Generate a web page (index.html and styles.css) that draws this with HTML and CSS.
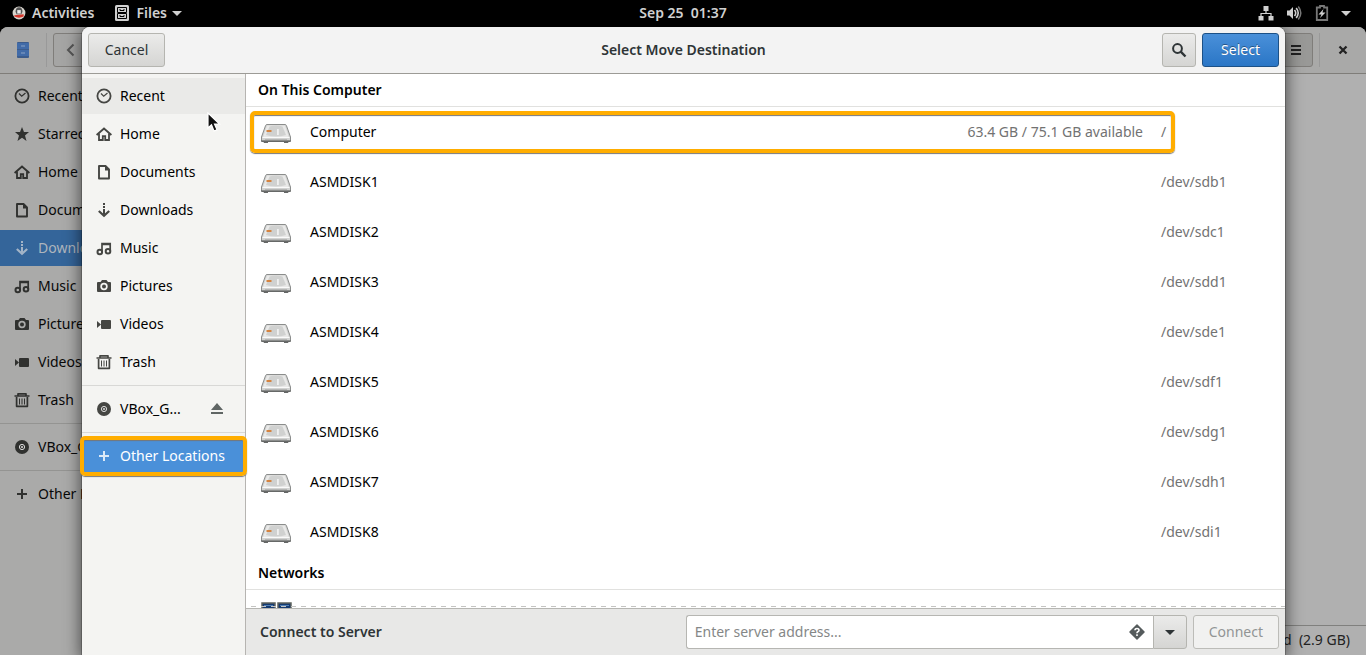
FILE: index.html
```html
<!DOCTYPE html>
<html lang="en">
<head>
<meta charset="utf-8">
<title>Select Move Destination</title>
<link rel="stylesheet" href="styles.css">
</head>
<body>
<svg class="sprite" aria-hidden="true">
  <symbol id="i-recent" viewBox="0 0 16 16"><circle cx="8" cy="8" r="6.6" fill="none" stroke="currentColor" stroke-width="1.8"/><path d="M5 5.500l2.700 2.700L11.500 5" fill="none" stroke="currentColor" stroke-width="1.200"/></symbol>
  <symbol id="i-star" viewBox="0 0 16 16"><path d="M8 1l2 5h5l-4 3.400L12.500 15 8 11.700 3.500 15 5 9.400 1 6h5z" fill="currentColor"/></symbol>
  <symbol id="i-home" viewBox="0 0 16 16"><path d="M.6 9L8 2.600 15.400 9" fill="none" stroke="currentColor" stroke-width="1.900"/><path d="M3 7.500V14h3.800v-3.800h2.400V14H13V7.500" fill="none" stroke="currentColor" stroke-width="1.800"/></symbol>
  <symbol id="i-doc" viewBox="0 0 16 16"><path d="M3 2h6.500L13 5.500V14.500H3z" fill="none" stroke="currentColor" stroke-width="1.900" stroke-linejoin="round"/><path d="M9 1v5.500h5z" fill="currentColor"/></symbol>
  <symbol id="i-down" viewBox="0 0 16 16"><path d="M7 1h2v2H7zM7 4h2v2H7zM7 7h2v5H7z" fill="currentColor"/><path d="M2.800 9L8 13.700 13.200 9" fill="none" stroke="currentColor" stroke-width="2.200"/></symbol>
  <symbol id="i-music" viewBox="0 0 16 16"><path d="M6 12V3.500h8.200V11M6 4.500h8" fill="none" stroke="currentColor" stroke-width="1.700"/><circle cx="3.800" cy="12" r="2.300" fill="none" stroke="currentColor" stroke-width="2"/><circle cx="12" cy="11.200" r="2.300" fill="none" stroke="currentColor" stroke-width="2"/></symbol>
  <symbol id="i-photo" viewBox="0 0 16 16"><path fill="currentColor" fill-rule="evenodd" d="M2 4h2.500L6 2h4.500L12 4h2q1 0 1 1v8q0 1-1 1H2q-1 0-1-1V5q0-1 1-1zM8 4.800a3.700 3.700 0 100 7.400 3.700 3.700 0 000-7.400z"/><circle cx="8" cy="8.500" r="2" fill="currentColor"/></symbol>
  <symbol id="i-video" viewBox="0 0 16 16"><rect x="5" y="4" width="10" height="9" rx="1" fill="currentColor"/><path d="M1 5l4 3.500L1 12z" fill="currentColor"/></symbol>
  <symbol id="i-trash" viewBox="0 0 16 16"><path d="M.5 4h15M4 3.500V1.800h8v1.700M2.600 5v9.300h10.800V5" fill="none" stroke="currentColor" stroke-width="1.700" stroke-linejoin="round"/><path d="M5.500 6.500v6M8 6.500v6M10.500 6.500v6" stroke="currentColor"/></symbol>
  <symbol id="i-disc" viewBox="0 0 16 16"><circle cx="8" cy="8" r="7" fill="currentColor"/><circle cx="8" cy="8" r="2.600" fill="none" stroke="#ddd" stroke-width="1"/><circle cx="8" cy="8" r="1" fill="#ddd"/></symbol>
  <symbol id="i-plus" viewBox="0 0 16 16"><path d="M8 3v10M3 8h10" stroke="currentColor" stroke-width="2"/></symbol>
  <symbol id="i-eject" viewBox="0 0 16 16"><path d="M8 2l6 7H2zM2 11h12v2H2z" fill="currentColor"/></symbol>
  <symbol id="i-search" viewBox="0 0 16 16"><circle cx="6.500" cy="6.500" r="4.400" fill="none" stroke="currentColor" stroke-width="2"/><path d="M9.700 9.700l4.800 4.800" stroke="currentColor" stroke-width="2.400"/></symbol>
  <symbol id="i-menu" viewBox="0 0 16 16"><path d="M3 4h10M3 8h10M3 12h10" stroke="currentColor" stroke-width="2"/></symbol>
  <symbol id="i-close" viewBox="0 0 16 16"><path d="M4.500 4.500l7 7M11.500 4.500l-7 7" stroke="currentColor" stroke-width="2.300"/></symbol>
  <symbol id="i-back" viewBox="0 0 16 16"><path d="M11.500 2.500L6 8l5.500 5.500" fill="none" stroke="currentColor" stroke-width="2"/></symbol>
  <symbol id="i-caret" viewBox="0 0 16 16"><path d="M3 6h10l-5 5z" fill="currentColor"/></symbol>
  <symbol id="i-help" viewBox="0 0 16 16"><path d="M8 1l7 7-7 7-7-7z" fill="currentColor" stroke="currentColor" stroke-width="1.500" stroke-linejoin="round"/><path d="M6 6.300q0-1.800 2-1.800t2 1.700q0 1-1.200 1.600-.8.400-.8 1.500M8 10.300v1.800" fill="none" stroke="#fff" stroke-width="1.600"/></symbol>
  <symbol id="i-cabinet" viewBox="0 0 16 16"><rect x="1" width="14" height="16" rx="1.500" fill="currentColor"/><path d="M3.500 2.500h9v5h-9zM3.500 8.500h9v5h-9z" fill="none" stroke="#000"/><path d="M6 4v1.500h4V4M6 10v1.500h4V10" fill="none" stroke="#000"/></symbol>
  <symbol id="i-network" viewBox="0 0 16 16"><path d="M5.500 1h5v5h-5zM.5 11h5v4.500h-5zM10.500 11h5v4.500h-5z" fill="currentColor"/><path d="M8 6v2.500M3 11V8.500h10V11" fill="none" stroke="currentColor" stroke-width="1.200"/></symbol>
  <symbol id="i-sound" viewBox="0 0 16 16"><path d="M1 5.500h2.500L7 2v12l-3.500-3.500H1z" fill="currentColor"/><path d="M8.500 5q2.500 3 0 6M10.200 3q4 5 0 10" fill="none" stroke="currentColor" stroke-width="1.600"/><path d="M12.300 1.500q5 6.500 0 13" fill="none" stroke="#777" stroke-width="1.500"/></symbol>
  <symbol id="i-battery" viewBox="0 0 16 16"><path d="M6 1h4v1.500h3.200v12.500H2.800V2.500H6z" fill="none" stroke="#777" stroke-width="1.800"/><path d="M9.500 4L4.500 9.500h3L6 13l5.500-5.500h-3z" fill="currentColor"/></symbol>
  <symbol id="i-drive" viewBox="0 0 32 24">
    <path d="M1 17v4q0 1 1 1h1.500l.5 1h4v-1h16v1h4l.5-1H30q1 0 1-1v-4z" fill="#666867"/>
    <path d="M7 4.500h18q1 0 1.400 1L30.500 17v2.500q0 1-1 1h-27q-1 0-1-1V17L5.600 5.500q.4-1 1.400-1z" fill="#d2d3d2" stroke="#8b8d8c"/>
    <path d="M7 5.500h18L28.800 17H3.200z" fill="#e9e9e8"/>
    <path d="M9.500 6.500q6.500-2 13 0l3.500 8.500q-10 3-20 0z" fill="#d0d1d0"/>
    <path d="M17 9h1.800v6H17z" fill="#f0f0f0"/>
    <path d="M6.500 10h5v2h-5z" fill="#d5833f"/>
    <path d="M2.500 17.500h27" stroke="#fafafa"/><path d="M5 19.500h22" stroke="#b5b6b5"/>
  </symbol>
  <symbol id="i-screens" viewBox="0 0 32 16"><path d="M2 1h13v14H2zM18 1h13v14H18z" fill="#153a70" stroke="#5d625c" stroke-width="1.500"/><path d="M4 3.500h9M20 3.500h9" stroke="#4f7fb5"/></symbol>
</svg>

<header class="topbar">
  <div class="topbar-side">
    <button class="top-item"><svg class="avatar" viewBox="0 0 12 12"><circle cx="6" cy="6" r="5.500" fill="#d9d5ce"/><path d="M3 5q0-4 3-4t3 4l-1 2H4z" fill="#555"/><path d="M4.500 3.500h3v3h-3z" fill="#eee"/><path d="M2 8l8-1v2Q6 11 2 9z" fill="#d5352b"/></svg>Activities</button>
    <button class="top-item"><svg class="icon"><use href="#i-cabinet"/></svg>Files<svg class="icon caret"><use href="#i-caret"/></svg></button>
  </div>
  <time class="clock">Sep 25&nbsp; 01:37</time>
  <div class="topbar-side status">
    <svg class="icon"><use href="#i-network"/></svg>
    <svg class="icon"><use href="#i-sound"/></svg>
    <svg class="icon"><use href="#i-battery"/></svg>
    <svg class="icon caret"><use href="#i-caret"/></svg>
  </div>
</header>

<div class="desktop">
  <section class="window" aria-label="Files">
    <div class="window-bar">
      <span class="app"><svg class="icon" viewBox="0 0 16 16"><rect x="2" width="12" height="16" rx="1" fill="#3c5c8c"/><path d="M2 1h12v6H2zM2 8h12v6H2z" fill="#416ba8"/><path d="M6 4h4M6 11h4" stroke="#8ca4c6"/></svg></span>
      <button class="btn square" aria-label="Back"><svg class="icon"><use href="#i-back"/></svg></button>
      <button class="btn square menu" aria-label="Menu"><svg class="icon"><use href="#i-menu"/></svg></button>
      <button class="close" aria-label="Close"><svg class="icon"><use href="#i-close"/></svg></button>
    </div>
    <div class="window-body">
      <nav class="places">
        <a class="place" href="#"><svg class="icon"><use href="#i-recent"/></svg>Recent</a>
        <a class="place" href="#"><svg class="icon"><use href="#i-star"/></svg>Starred</a>
        <a class="place" href="#"><svg class="icon"><use href="#i-home"/></svg>Home</a>
        <a class="place" href="#"><svg class="icon"><use href="#i-doc"/></svg>Documents</a>
        <a class="place current" href="#"><svg class="icon"><use href="#i-down"/></svg>Downloads</a>
        <a class="place" href="#"><svg class="icon"><use href="#i-music"/></svg>Music</a>
        <a class="place" href="#"><svg class="icon"><use href="#i-photo"/></svg>Pictures</a>
        <a class="place" href="#"><svg class="icon"><use href="#i-video"/></svg>Videos</a>
        <a class="place" href="#"><svg class="icon"><use href="#i-trash"/></svg>Trash</a>
        <hr>
        <a class="place" href="#"><svg class="icon"><use href="#i-disc"/></svg>VBox_G...</a>
        <hr>
        <a class="place" href="#"><svg class="icon"><use href="#i-plus"/></svg>Other Locations</a>
      </nav>
      <div class="window-main"><p class="statusbar">selected&nbsp; (2.9 GB)</p></div>
    </div>
  </section>

  <section class="dialog" role="dialog" aria-labelledby="dialog-title">
    <header class="dialog-bar">
      <div class="bar-side"><button class="btn">Cancel</button></div>
      <h1 id="dialog-title">Select Move Destination</h1>
      <div class="bar-side end">
        <button class="btn square" aria-label="Search"><svg class="icon"><use href="#i-search"/></svg></button>
        <button class="btn primary">Select</button>
      </div>
    </header>
    <div class="dialog-body">
      <nav class="places">
        <a class="place hover" href="#"><svg class="icon"><use href="#i-recent"/></svg>Recent</a>
        <a class="place" href="#"><svg class="icon"><use href="#i-home"/></svg>Home</a>
        <a class="place" href="#"><svg class="icon"><use href="#i-doc"/></svg>Documents</a>
        <a class="place" href="#"><svg class="icon"><use href="#i-down"/></svg>Downloads</a>
        <a class="place" href="#"><svg class="icon"><use href="#i-music"/></svg>Music</a>
        <a class="place" href="#"><svg class="icon"><use href="#i-photo"/></svg>Pictures</a>
        <a class="place" href="#"><svg class="icon"><use href="#i-video"/></svg>Videos</a>
        <a class="place" href="#"><svg class="icon"><use href="#i-trash"/></svg>Trash</a>
        <hr>
        <div class="place"><svg class="icon"><use href="#i-disc"/></svg><a href="#">VBox_G...</a><button class="eject" aria-label="Eject"><svg class="icon"><use href="#i-eject"/></svg></button></div>
        <hr>
        <a class="place current marked" href="#"><svg class="icon"><use href="#i-plus"/></svg>Other Locations</a>
        <svg class="pointer" viewBox="0 0 14 20"><path d="M1 1v15l3.500-3.200L7 19l3-1.200L7.500 12H12.500z" fill="#111" stroke="#fff" stroke-width="1.200"/></svg>
      </nav>
      <main class="locations">
        <div class="list">
          <h2>On This Computer</h2>
          <ul>
            <li class="marked"><svg class="drive"><use href="#i-drive"/></svg><span class="name">Computer</span><span class="space">63.4 GB / 75.1 GB available</span><span class="path">/</span></li>
            <li><svg class="drive"><use href="#i-drive"/></svg><span class="name">ASMDISK1</span><span class="path">/dev/sdb1</span></li>
            <li><svg class="drive"><use href="#i-drive"/></svg><span class="name">ASMDISK2</span><span class="path">/dev/sdc1</span></li>
            <li><svg class="drive"><use href="#i-drive"/></svg><span class="name">ASMDISK3</span><span class="path">/dev/sdd1</span></li>
            <li><svg class="drive"><use href="#i-drive"/></svg><span class="name">ASMDISK4</span><span class="path">/dev/sde1</span></li>
            <li><svg class="drive"><use href="#i-drive"/></svg><span class="name">ASMDISK5</span><span class="path">/dev/sdf1</span></li>
            <li><svg class="drive"><use href="#i-drive"/></svg><span class="name">ASMDISK6</span><span class="path">/dev/sdg1</span></li>
            <li><svg class="drive"><use href="#i-drive"/></svg><span class="name">ASMDISK7</span><span class="path">/dev/sdh1</span></li>
            <li><svg class="drive"><use href="#i-drive"/></svg><span class="name">ASMDISK8</span><span class="path">/dev/sdi1</span></li>
          </ul>
          <h2>Networks</h2>
          <div class="network"><svg class="screens"><use href="#i-screens"/></svg></div>
        </div>
        <form class="connect">
          <label for="server">Connect to Server</label>
          <div class="combo">
            <div class="entry"><input id="server" type="text" placeholder="Enter server address..."><svg class="icon"><use href="#i-help"/></svg></div>
            <button type="button" class="btn square drop" aria-label="Recent servers"><svg class="icon"><use href="#i-caret"/></svg></button>
          </div>
          <button class="btn" disabled>Connect</button>
        </form>
      </main>
    </div>
  </section>
</div>
</body>
</html>
```
FILE: styles.css
```css
* { box-sizing: border-box; }
body {
  display: flex;
  flex-direction: column;
  height: 100vh;
  margin: 0;
  overflow: hidden;
  background: #000;
  color: #000;
  font: 14px/20px "Noto Sans", sans-serif;
}
button, input { font: inherit; color: inherit; }
a { color: inherit; text-decoration: none; }
h1, h2, p, ul { margin: 0; padding: 0; }
.sprite { position: absolute; width: 0; height: 0; }
.icon { flex: none; display: block; width: 16px; height: 16px; }

.topbar {
  display: flex;
  flex: none;
  align-items: center;
  height: 27px;
  padding: 0 12px 2px;
  color: #d0d0d0;
  font-weight: 600;
}
.topbar-side { display: flex; flex: 1; align-items: center; gap: 20px; }
.status { justify-content: flex-end; gap: 12px; }
.top-item { display: flex; align-items: center; gap: 6px; padding: 0; border: 0; background: none; }
.avatar { width: 14px; height: 14px; }
.caret { margin-left: -4px; }

.desktop { position: relative; flex: 1; min-height: 0; }
.window { display: flex; flex-direction: column; height: 100%; border-radius: 8px 8px 0 0; overflow: hidden; background: #b0b0b0; }
.window-bar {
  display: flex;
  flex: none;
  align-items: center;
  height: 47px;
  padding: 0 15px;
  border-bottom: 1px solid #7f7d79;
  background: #a9a9a8;
}
.app { display: flex; align-items: center; height: 34px; margin-right: 6px; padding-right: 15px; border-right: 1px solid #999; }
.window .btn { border-color: #7f7d7a; background: #a5a5a4; color: #555; }
.window .menu { margin-left: auto; background: #999997; color: #222; }
.close { height: 34px; margin-left: 6px; padding: 0 0 0 15px; border: 0; border-left: 1px solid #999; background: none; color: #222; }
.window-body { display: flex; flex: 1; min-height: 0; }
.window-main { display: flex; flex: 1; flex-direction: column; justify-content: flex-end; }
.statusbar { height: 30px; padding: 4px 16px; border-top: 1px solid #80807e; color: #222; text-align: right; }

.places {
  position: relative;
  display: flex;
  flex: none;
  flex-direction: column;
  gap: 2px;
  width: 164px;
  padding-top: 4px;
  border-right: 1px solid #b6b4b1;
  background: #f4f4f2;
}
.window .places { background: #aaaaa9; color: #080808; }
.place { display: flex; align-items: center; gap: 8px; height: 36px; padding: 0 14px; white-space: nowrap; }
.place .icon { color: #454643; }
.window .place .icon { color: #30312f; }
.places hr { width: 100%; height: 1px; margin: 3px 0; border: 0; background: #d8d8d6; }
.window .places hr { background: #949492; }
.hover { background: #eaeae8; }
.current { background: #4a90d9; color: #fff; }
.place.current .icon { color: #dbe9f7; }
.window .current { background: #34659a; color: #aeb5bd; }
.window .place.current .icon { color: #a3b4c7; }
.eject { margin-left: auto; margin-right: 6px; padding: 0; border: 0; background: none; }
.place .eject .icon { color: #5f6564; }
.pointer { position: absolute; top: 38px; left: 125px; width: 14px; height: 20px; }

.dialog {
  position: absolute;
  inset: 0 81px 0 82px;
  display: flex;
  flex-direction: column;
  border-radius: 8px 8px 0 0;
  background: #f4f4f2;
  box-shadow: 0 3px 16px 2px rgb(0 0 0 / 55%), 0 0 0 1px rgb(0 0 0 / 20%);
  clip-path: inset(0 -40px);
}
.dialog-bar {
  display: flex;
  flex: none;
  align-items: center;
  height: 47px;
  padding: 0 6px;
  border-bottom: 1px solid #9c9b96;
  border-radius: 8px 8px 0 0;
  background: #f3f3f3;
}
.bar-side { display: flex; flex: 1; gap: 6px; }
.end { justify-content: flex-end; }
h1 { color: #2e3436; font-size: 14px; font-weight: 600; }
.btn {
  min-width: 77px;
  height: 34px;
  padding: 0 15px;
  border: 1px solid #b5b5b0;
  border-radius: 3px;
  background: linear-gradient(#ebebea, #d5d5d3);
  color: #2e3436;
}
.square { min-width: 34px; padding: 0 8px; }
.primary { border-color: #1c5187; background: linear-gradient(#4a90d9, #2a76c6); color: #fff; text-shadow: 0 -1px rgb(0 0 0 / 40%); }
.btn:disabled { border-color: #bcbcb8; background: #f1f1f0; color: #929595; }

.dialog-body { display: flex; flex: 1; min-height: 0; }
.locations { display: flex; flex: 1; flex-direction: column; min-width: 0; background: #fff; }
.list { position: relative; flex: 1; min-height: 0; overflow: hidden; }
.list::after { content: ""; position: absolute; right: 0; bottom: 1px; left: 0; height: 1px; background: repeating-linear-gradient(90deg, transparent 0 5px, #c4c4c2 5px 10px); }
h2 { height: 33px; padding: 6px 12px; border-bottom: 1px solid #e1e1df; font-size: 14px; line-height: 20px; font-weight: 600; }
ul { list-style: none; }
li { position: relative; display: flex; align-items: center; height: 50px; padding: 0 12px 0 14px; }
.drive { width: 32px; height: 24px; margin-right: 18px; }
.name { flex: 1; }
.space, .path { color: #727272; }
.path { width: 112px; margin-left: 18px; }
.marked { position: relative; }
.marked::after { content: ""; position: absolute; border: 4px solid #ffad00; border-radius: 5px; box-shadow: 0 1px 1px #777, inset 0 1px 1px #777; }
a.marked::after { inset: -2px; z-index: 1; }
li.marked::after { inset: 4px 110px 4px 4px; }
.network { padding: 12px 14px; }
.screens { display: block; width: 32px; height: 16px; }

.connect { display: flex; flex: none; align-items: center; gap: 6px; padding: 6px 6px 6px 14px; border-top: 1px solid #b6b6b2; background: #e8e8e7; }
label { flex: 1; color: #2e3436; font-weight: 600; }
.combo { display: flex; flex: none; width: 501px; }
.entry { display: flex; flex: 1; align-items: center; height: 34px; padding: 0 8px; border: 1px solid #b6b6b2; border-right: 0; border-radius: 3px 0 0 3px; background: #fff; color: #555b5c; }
input { flex: 1; min-width: 0; padding: 0; border: 0; outline: 0; background: none; }
input::placeholder { color: #858787; opacity: 1; }
.drop { border-radius: 0 3px 3px 0; }
```
